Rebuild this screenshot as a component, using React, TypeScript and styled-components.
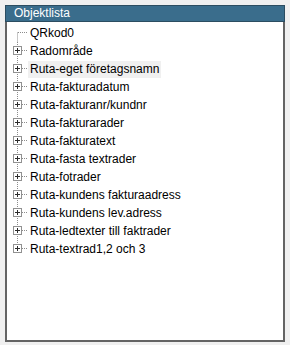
import React from 'react';
import styled, { createGlobalStyle } from 'styled-components';

const GlobalStyle = createGlobalStyle`
  html, body {
    margin: 0;
    padding: 0;
    background: #f0f0f0;
  }
  body {
    font-family: "Liberation Sans", Arial, sans-serif;
  }
`;

const Page = styled.div`
  padding: 5px 5px 0 5px;
`;

const Panel = styled.div`
  width: 280px;
  height: 337px;
  box-sizing: border-box;
  display: flex;
  flex-direction: column;
  background: #ffffff;
  border: 2px solid #646464;
  border-top: none;
`;

const Header = styled.div`
  height: 17px;
  margin: 0 -2px;
  box-sizing: border-box;
  padding-left: 8px;
  background: #3a6d8c;
  border: 1px solid #2c4d61;
  color: #ffffff;
  font-size: 12px;
  line-height: 15px;
`;

const Tree = styled.ul`
  list-style: none;
  margin: 0;
  padding: 2px 0 0 0;
`;

const Row = styled.li`
  display: flex;
  align-items: center;
  height: 18px;
`;

const Label = styled.span<{ selected?: boolean }>`
  height: 17px;
  padding: 0 2px;
  font-size: 12px;
  line-height: 17px;
  color: #000000;
  white-space: nowrap;
  background: ${({ selected }) => (selected ? '#f0f0f0' : 'transparent')};
`;

type Pos = 'first' | 'middle' | 'last';

const Connector = ({ pos, expandable }: { pos: Pos; expandable: boolean }) => {
  const top = pos === 'first' ? 8.5 : 0;
  const bottom = pos === 'last' ? 8.5 : 18;
  return (
    <svg width="21" height="18" viewBox="0 0 21 18" style={{ flex: 'none' }}>
      <line x1="10.5" y1={top} x2="10.5" y2={bottom} stroke="#8c8c8c" strokeDasharray="1 1" />
      <line x1={expandable ? 15 : 11} y1="8.5" x2="21" y2="8.5" stroke="#8c8c8c" strokeDasharray="1 1" />
      {expandable && (
        <>
          <rect x="6.5" y="4.5" width="8" height="8" fill="#ffffff" stroke="#919191" />
          <line x1="8" y1="8.5" x2="13" y2="8.5" stroke="#2b2b2b" />
          <line x1="10.5" y1="6" x2="10.5" y2="11" stroke="#2b2b2b" />
        </>
      )}
    </svg>
  );
};

const items = [
  'QRkod0',
  'Radområde',
  'Ruta-eget företagsnamn',
  'Ruta-fakturadatum',
  'Ruta-fakturanr/kundnr',
  'Ruta-fakturarader',
  'Ruta-fakturatext',
  'Ruta-fasta textrader',
  'Ruta-fotrader',
  'Ruta-kundens fakturaadress',
  'Ruta-kundens lev.adress',
  'Ruta-ledtexter till faktrader',
  'Ruta-textrad1,2 och 3',
];

export default function App() {
  return (
    <>
      <GlobalStyle />
      <Page>
        <Panel>
          <Header>Objektlista</Header>
          <Tree>
            {items.map((name, i) => (
              <Row key={name}>
                <Connector
                  pos={i === 0 ? 'first' : i === items.length - 1 ? 'last' : 'middle'}
                  expandable={i !== 0}
                />
                <Label selected={i === 2}>{name}</Label>
              </Row>
            ))}
          </Tree>
        </Panel>
      </Page>
    </>
  );
}
